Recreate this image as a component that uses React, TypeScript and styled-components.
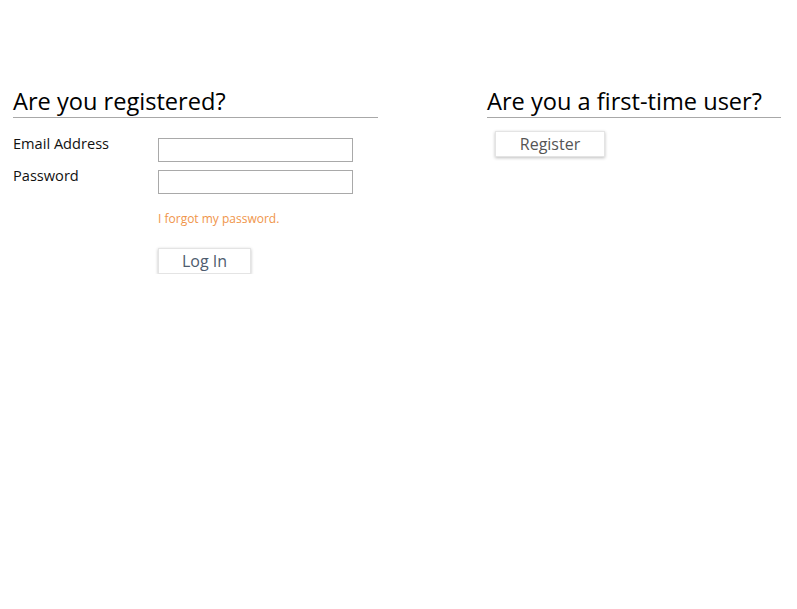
import React from "react";
import styled, { createGlobalStyle } from "styled-components";

const Global = createGlobalStyle`
  html, body { margin: 0; padding: 0; background: #fff; }
  body { font-family: "Open Sans", "Liberation Sans", sans-serif; color: #111; }
`;

const Page = styled.div`
  display: flex;
  align-items: flex-start;
  padding: 86px 0 0 13px;
  gap: 109px;
`;

const Column = styled.section<{ $width: number }>`
  width: ${(p) => p.$width}px;
  display: flex;
  flex-direction: column;
`;

const Heading = styled.h2`
  margin: 0;
  font-size: 23.6px;
  font-weight: 400;
  line-height: 31px;
  color: #000;
  border-bottom: 1px solid #a8a8a8;
`;

const Form = styled.div`
  display: grid;
  grid-template-columns: 145px 195px;
  row-gap: 8px;
  margin-top: 20px;
`;

const Label = styled.label`
  font-size: 14.6px;
  line-height: 18px;
  margin-top: -4px;
  color: #111;
`;

const Input = styled.input`
  box-sizing: border-box;
  width: 195px;
  height: 24px;
  border: 1px solid #a9a9a9;
  margin: 0;
  padding: 2px 4px;
  font-family: inherit;
  font-size: 14px;
`;

const Forgot = styled.a`
  grid-column: 2;
  margin-top: 9px;
  font-size: 12px;
  line-height: 16px;
  color: #f0954a;
  text-decoration: none;
`;

const Button = styled.button<{ $width: number; $color: string }>`
  box-sizing: border-box;
  width: ${(p) => p.$width}px;
  height: 26px;
  border: 1px solid #e4e4e4;
  background: #fff;
  box-shadow: 0 1px 3px rgba(0, 0, 0, 0.25);
  font-family: inherit;
  font-size: 16px;
  color: ${(p) => p.$color};
  padding: 0;
  cursor: pointer;
`;

const LoginCell = styled.div`
  grid-column: 2;
  margin-top: 13px;
`;

const RegisterWrap = styled.div`
  margin: 13px 0 0 8px;
`;

export default function App() {
  return (
    <>
      <Global />
      <Page>
        <Column $width={365}>
          <Heading>Are you registered?</Heading>
          <Form>
            <Label>Email Address</Label>
            <Input type="text" />
            <Label>Password</Label>
            <Input type="password" />
            <Forgot href="#">I forgot my password.</Forgot>
            <LoginCell>
              <Button $width={93} $color="#4d5b6e">Log In</Button>
            </LoginCell>
          </Form>
        </Column>
        <Column $width={294}>
          <Heading>Are you a first-time user?</Heading>
          <RegisterWrap>
            <Button $width={110} $color="#555">Register</Button>
          </RegisterWrap>
        </Column>
      </Page>
    </>
  );
}
